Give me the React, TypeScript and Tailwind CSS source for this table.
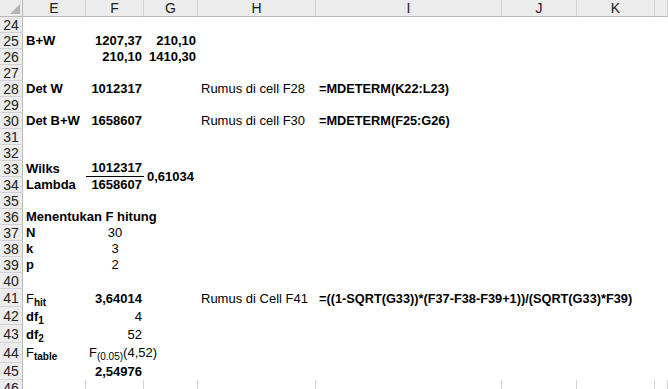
import React from "react";

type Cell = {
  v: React.ReactNode;
  align?: "l" | "r" | "c";
  bold?: boolean;
  cls?: string;
};

const COLS = ["E", "F", "G", "H", "I", "J", "K", "L"];
const ROWS = Array.from({ length: 23 }, (_, i) => 24 + i);

const sheet: Record<number, Record<string, Cell>> = {
  25: {
    E: { v: "B+W", bold: true },
    F: { v: "1207,37", align: "r", bold: true },
    G: { v: "210,10", align: "r", bold: true },
  },
  26: {
    F: { v: "210,10", align: "r", bold: true },
    G: { v: "1410,30", align: "r", bold: true },
  },
  28: {
    E: { v: "Det W", bold: true },
    F: { v: "1012317", align: "r", bold: true },
    H: { v: "Rumus di cell F28" },
    I: { v: "=MDETERM(K22:L23)", bold: true, cls: "text-[12.75px]" },
  },
  30: {
    E: { v: "Det B+W", bold: true },
    F: { v: "1658607", align: "r", bold: true },
    H: { v: "Rumus di cell F30" },
    I: { v: "=MDETERM(F25:G26)", bold: true, cls: "text-[12.75px]" },
  },
  33: {
    E: { v: "Wilks", bold: true },
    F: { v: "1012317", align: "r", bold: true, cls: "border-b border-black" },
  },
  34: {
    E: { v: "Lambda", bold: true },
    F: { v: "1658607", align: "r", bold: true },
  },
  36: { E: { v: "Menentukan F hitung", bold: true } },
  37: { E: { v: "N", bold: true }, F: { v: "30", align: "c" } },
  38: { E: { v: "k", bold: true }, F: { v: "3", align: "c" } },
  39: { E: { v: "p", bold: true }, F: { v: "2", align: "c" } },
  41: {
    E: {
      v: (
        <>
          F<sub className="text-[10px] font-bold">hit</sub>
        </>
      ),
    },
    F: { v: "3,64014", align: "r", bold: true },
    H: { v: "Rumus di Cell F41" },
    I: {
      v: "=((1-SQRT(G33))*(F37-F38-F39+1))/(SQRT(G33)*F39)",
      bold: true,
      cls: "text-[12.75px]",
    },
  },
  42: {
    E: {
      v: (
        <>
          df<sub className="text-[10px]">1</sub>
        </>
      ),
      bold: true,
    },
    F: { v: "4", align: "r" },
  },
  43: {
    E: {
      v: (
        <>
          df<sub className="text-[10px]">2</sub>
        </>
      ),
      bold: true,
    },
    F: { v: "52", align: "r" },
  },
  44: {
    E: {
      v: (
        <>
          F<sub className="text-[10px] font-bold">table</sub>
        </>
      ),
    },
    F: {
      v: (
        <>
          F<sub className="text-[10px]">(0.05)</sub>(4,52)
        </>
      ),
      cls: "pl-[1px]",
    },
  },
  45: { F: { v: "2,54976", align: "r", bold: true } },
};

function Corner() {
  return (
    <div className="relative bg-[#ececec] border-r border-b border-[#b9b9b9]">
      <svg className="absolute right-[2px] bottom-[2px]" width="10" height="10" viewBox="0 0 10 10">
        <polygon points="10,0 10,10 0,10" fill="#b5b5b5" />
      </svg>
    </div>
  );
}

export default function App() {
  return (
    <div className="h-[389px] w-[668px] overflow-hidden bg-white font-['Liberation_Sans',Arial,sans-serif] text-[13px] text-black">
      <div className="grid grid-cols-[23px_63px_58px_54px_118px_186px_75px_78px_1fr] grid-rows-[17px_repeat(17,16px)_18px_18px_18px_20px_17px_16px]">
        <Corner />
        {COLS.map((c) => (
          <div
            key={c}
            className="flex items-center justify-center bg-[#ececec] border-r border-b border-r-[#d2d2d2] border-b-[#b9b9b9] text-[14px] leading-none text-[#222]"
          >
            {c === "L" ? "" : c}
          </div>
        ))}

        {ROWS.map((r) => {
          const row = sheet[r] ?? {};
          return (
            <React.Fragment key={r}>
              <div className="flex items-center justify-center bg-[#ececec] border-r border-b border-r-[#b9b9b9] border-b-[#d2d2d2] text-[14px] leading-none text-[#222]">
                {r}
              </div>
              {COLS.map((c) => {
                if (r === 34 && c === "G") return null;
                if (r === 33 && c === "G") {
                  return (
                    <div key={c} className="row-span-2 flex items-center pl-[3px] font-bold whitespace-nowrap">
                      0,61034
                    </div>
                  );
                }
                const cell = row[c];
                const align = cell?.align ?? "l";
                return (
                  <div
                    key={c}
                    className={[
                      "flex items-end whitespace-nowrap leading-[16px] overflow-visible",
                      align === "r" ? "justify-end pr-[2px]" : align === "c" ? "justify-center" : "pl-[3px]",
                      cell?.bold ? "font-bold" : "",
                      r === 44 ? "pb-[2px]" : "",
                      r === 46 ? "border-r border-[#d4d4d4]" : "",
                      c === "I" ? "pl-[2px]" : "",
                      cell?.cls ?? "",
                    ].join(" ")}
                  >
                    {cell ? <span>{cell.v}</span> : null}
                  </div>
                );
              })}
            </React.Fragment>
          );
        })}
      </div>
    </div>
  );
}
